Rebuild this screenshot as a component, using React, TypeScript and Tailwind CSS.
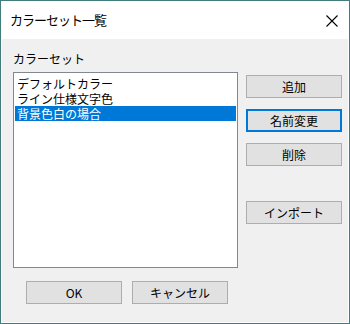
const FONT = "font-['Noto_Sans_CJK_JP','Noto_Sans',sans-serif]";

const items = ["デフォルトカラー", "ライン仕様文字色", "背景色白の場合"];

function Btn({ label, primary = false, className = "" }: { label: string; primary?: boolean; className?: string }) {
    return (
        <button
            className={`w-[96px] h-[23px] bg-[#e1e1e1] text-[12px] leading-none text-black flex items-center justify-center ${
                primary ? "border-2 border-[#0078d7]" : "border border-[#adadad]"
            } ${className}`}
        >
            {label}
        </button>
    );
}

export default function App() {
    const selected = 2;
    return (
        <div className={`w-[350px] h-[324px] border border-[#417d7d] flex flex-col bg-white ${FONT}`}>
            <div className="h-[38px] flex items-center justify-between pl-[9px] pr-[11px] bg-white">
                <span className="text-[13px] text-black tracking-[-1px]">カラーセット一覧</span>
                <svg width="12" height="12" viewBox="0 0 12 12" className="mt-[2px]">
                    <path d="M0.5 0.5L11.5 11.5M11.5 0.5L0.5 11.5" stroke="#000" strokeWidth="1.1" />
                </svg>
            </div>
            <div className="flex-1 bg-[#f0f0f0] border-x border-b border-white flex flex-col pl-[11px] pt-[12px]">
                <div className="text-[12px] leading-[15px] text-black">カラーセット</div>
                <div className="flex mt-[6px]">
                    <div className="w-[225px] h-[196px] bg-white border border-[#828790] pt-[3px] px-px">
                        {items.map((it, i) => (
                            <div
                                key={it}
                                className={`h-[15px] leading-[15px] text-[12px] pl-[2px] ${
                                    i === selected ? "bg-[#0078d7] text-white" : "text-black"
                                }`}
                            >
                                {it}
                            </div>
                        ))}
                    </div>
                    <div className="flex flex-col ml-[8px] pt-[3px]">
                        <Btn label="追加" />
                        <Btn label="名前変更" primary className="mt-[11px]" />
                        <Btn label="削除" className="mt-[11px]" />
                        <Btn label="インポート" className="mt-[35px]" />
                    </div>
                </div>
                <div className="flex gap-[10px] ml-[13px] mt-[13px]">
                    <Btn label="OK" />
                    <Btn label="キャンセル" />
                </div>
            </div>
        </div>
    );
}
